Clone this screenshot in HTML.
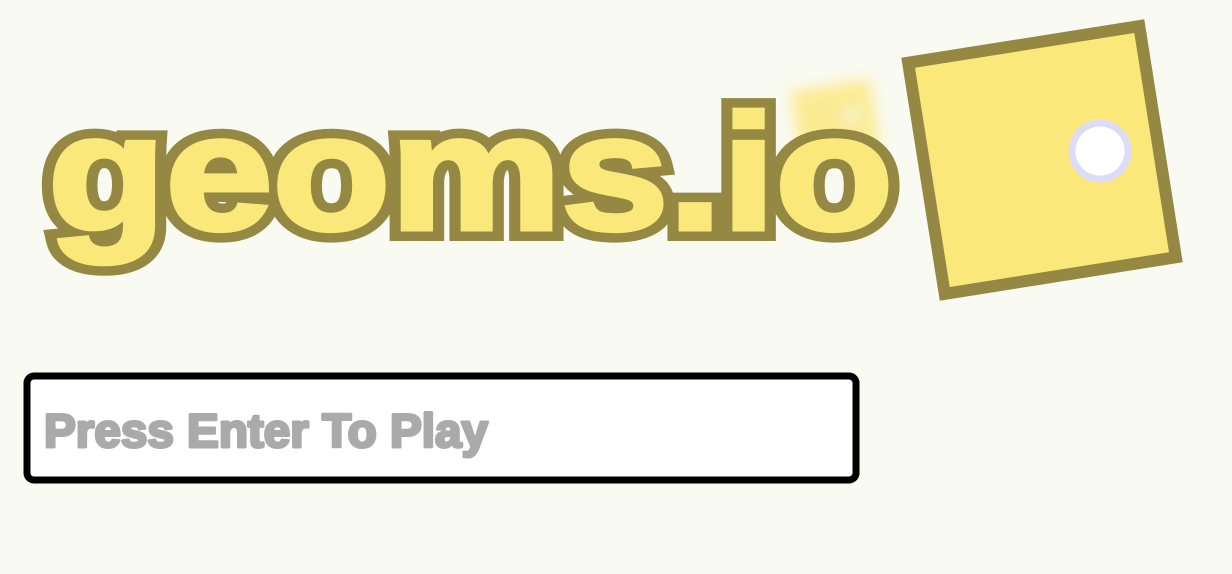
<!DOCTYPE html>
<html><head><style>
html,body{margin:0;padding:0;background:#f9faf1;width:1232px;height:574px;overflow:hidden}
svg{position:absolute;left:0;top:0}
</style></head><body>
<svg width="1232" height="574" viewBox="0 0 1232 574">
<defs><filter id="b" x="-50%" y="-50%" width="200%" height="200%"><feGaussianBlur stdDeviation="7"/></filter></defs>
<rect x="795" y="85" width="80" height="65" fill="#fbe87b" opacity="0.8" filter="url(#b)" transform="rotate(-9 835 117)"/>
<circle cx="852" cy="115" r="10" fill="#f6f3d8" opacity="0.8" filter="url(#b)"/>
<g font-family="Liberation Sans, sans-serif" font-weight="bold" font-size="164">
<text x="48" y="229" textLength="845" lengthAdjust="spacingAndGlyphs" fill="#fbe87b" stroke="#958843" stroke-width="24" stroke-linejoin="miter">geoms.io</text>
<text x="48" y="229" textLength="845" lengthAdjust="spacingAndGlyphs" fill="#fbe87b" stroke="#fbe87b" stroke-width="5">geoms.io</text>
</g>
<g transform="rotate(-9 1042 160)">
<rect x="925" y="43" width="234" height="234" fill="#fbe87b" stroke="#958843" stroke-width="12"/>
</g>
<circle cx="1100" cy="151" r="28" fill="#fff" stroke="#dcdcf8" stroke-width="7"/>
<rect x="27" y="376" width="829" height="104" rx="7" fill="#fff" stroke="#000" stroke-width="7"/>
<text x="44" y="447" textLength="444" lengthAdjust="spacingAndGlyphs" font-family="Liberation Sans, sans-serif" font-weight="bold" font-size="47" fill="#aaaaaa" stroke="#aaaaaa" stroke-width="3" stroke-linejoin="round">Press Enter To Play</text>
</svg>
</body></html>
